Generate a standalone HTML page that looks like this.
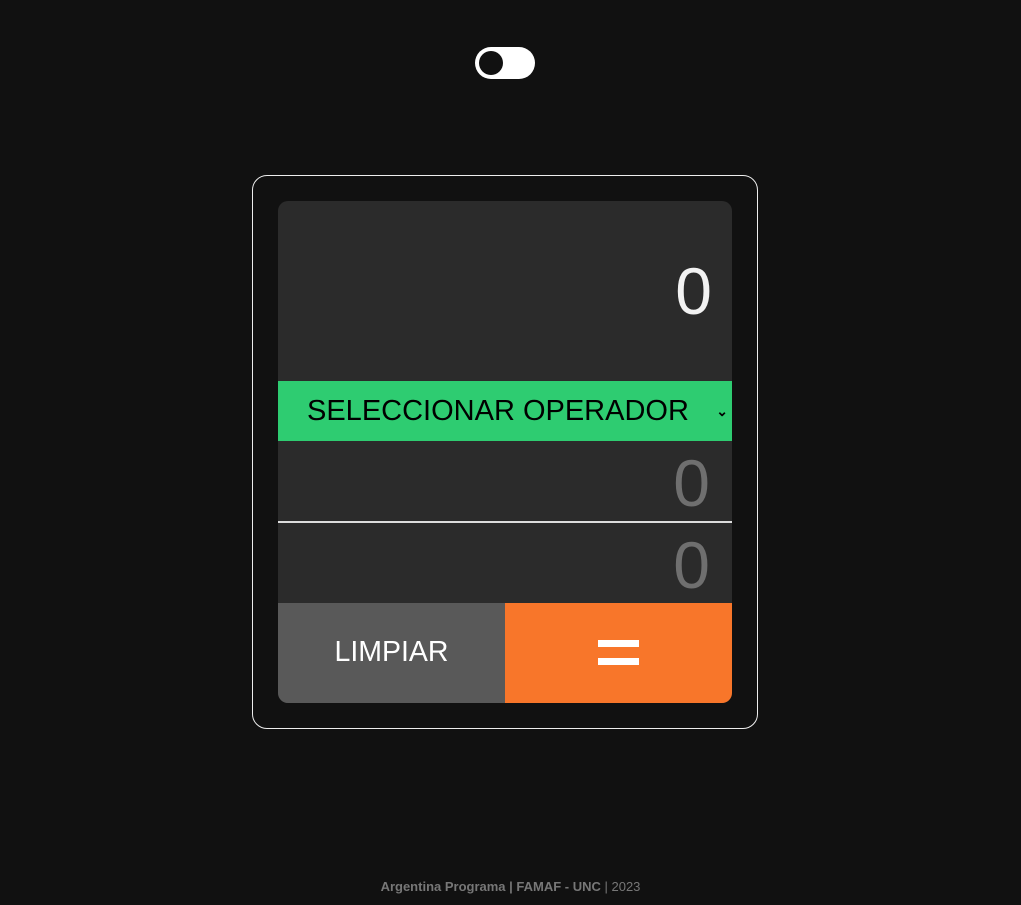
<!DOCTYPE html>
<html><head><meta charset="utf-8"><style>
*{margin:0;padding:0;box-sizing:border-box}
body{width:1021px;height:905px;background:#111;font-family:"Liberation Sans",Arial,sans-serif;position:relative;overflow:hidden}
.tg{position:absolute;left:475px;top:47px;width:60px;height:32px;border-radius:16px;background:#fff}
.tg:after{content:"";position:absolute;left:4px;top:4px;width:24px;height:24px;border-radius:50%;background:#111}
.card{position:absolute;left:252px;top:175px;width:506px;height:554px;border:1px solid #eee;border-radius:15px}
.in{position:absolute;left:278px;top:201px;width:454px;height:502px;border-radius:10px;overflow:hidden;background:#2b2b2b}
.disp{height:180px;position:relative}
.disp span{position:absolute;right:20px;top:52px;font-size:66px;color:#f2f2f2}
.sel{height:60px;background:#2ecc71;color:#000;font-size:29px;line-height:60px;padding-left:29px;position:relative;white-space:nowrap}
.sel i{position:absolute;right:4px;top:0;font-style:normal;font-size:14px;font-weight:bold}
.num{height:80px;position:relative}
.num span{position:absolute;right:22px;top:4px;font-size:66px;color:#6f6f6f}
.line{height:2px;background:#ddd}
.btns{display:flex;height:100px}
.b1{width:227px;background:#595959;color:#fff;font-size:28.5px;text-align:center;line-height:98px}
.b2{flex:1;background:#f8762a;position:relative}
.b2:before,.b2:after{content:"";position:absolute;left:93px;width:41px;height:7px;background:#fff}
.b2:before{top:37px}.b2:after{top:55px}
.ft{position:absolute;top:879px;left:0;width:1021px;text-align:center;font-size:13px;color:#777}
</style></head><body>
<div class="tg"></div>
<div class="card"></div>
<div class="in">
<div class="disp"><span>0</span></div>
<div class="sel">SELECCIONAR OPERADOR<i>&#8964;</i></div>
<div class="num"><span>0</span></div>
<div class="line"></div>
<div class="num"><span>0</span></div>
<div class="btns"><div class="b1">LIMPIAR</div><div class="b2"></div></div>
</div>
<div class="ft"><b>Argentina Programa | FAMAF - UNC</b> | 2023</div>
</body></html>
